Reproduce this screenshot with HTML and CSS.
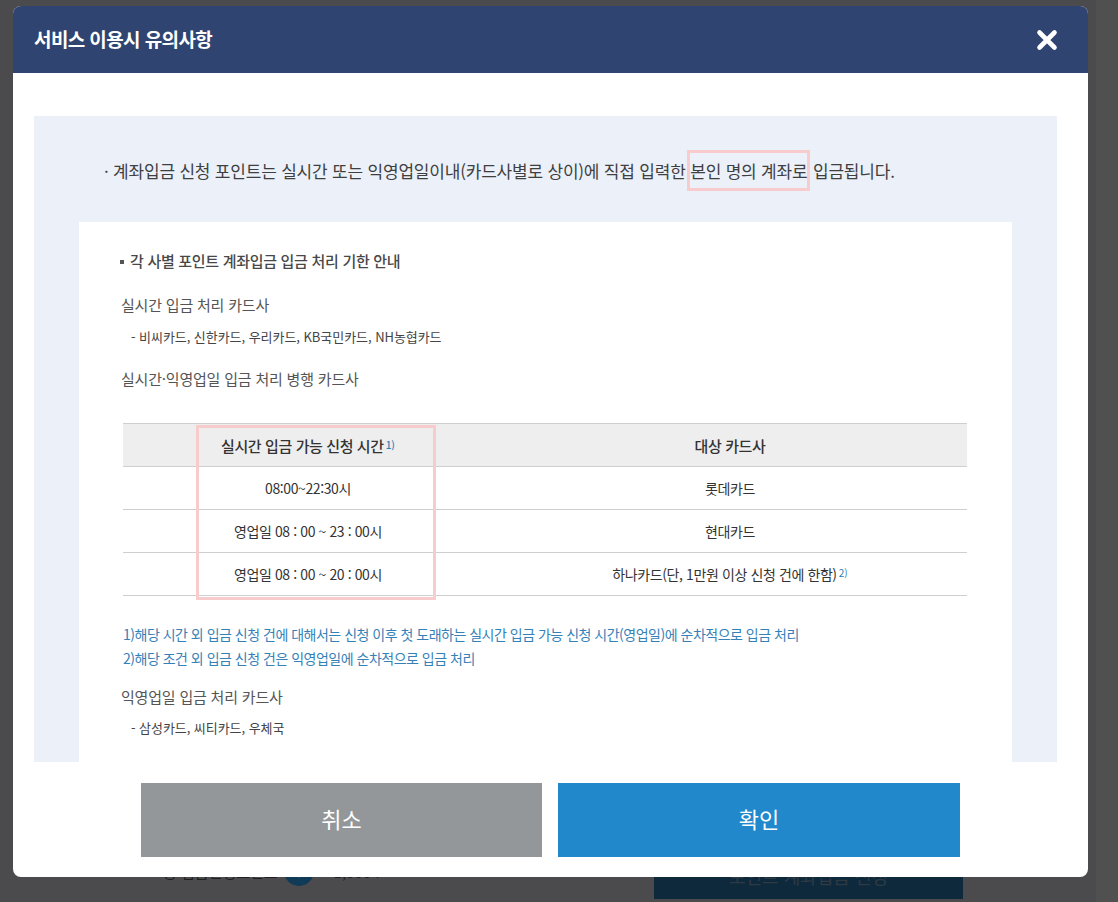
FILE: index.html
```html
<!DOCTYPE html>
<html lang="ko">
<head>
<meta charset="utf-8">
<title>서비스 이용시 유의사항</title>
<link rel="stylesheet" href="styles.css">
</head>
<body>
<div class="page">
  <div class="page-row">
    <div class="page-summary">
      <span class="page-label">총 입금신청포인트</span>
      <span class="page-help">?</span>
      <span class="page-amount">1,000 P</span>
    </div>
    <div class="page-btn">포인트 계좌입금 신청</div>
  </div>
</div>

<div class="modal" role="dialog" aria-labelledby="modal-title">
  <div class="modal-header">
    <h2 class="modal-title" id="modal-title">서비스 이용시 유의사항</h2>
    <button class="modal-close" type="button" aria-label="닫기">
      <svg width="22" height="22" viewBox="0 0 22 22" aria-hidden="true">
        <path d="M3.5 3.5 L18.5 18.5 M18.5 3.5 L3.5 18.5" stroke="#fff" stroke-width="4.6" stroke-linecap="round" fill="none"/>
      </svg>
    </button>
  </div>

  <div class="modal-body">
    <div class="notice-box">
      <p class="notice-lead">· 계좌입금 신청 포인트는 실시간 또는 익영업일이내(카드사별로 상이)에 직접 입력한 <span class="hl">본인 명의 계좌로</span> 입금됩니다.</p>

      <div class="notice-card">
        <h3 class="card-title"><span class="sq" aria-hidden="true"></span>각 사별 포인트 계좌입금 입금 처리 기한 안내</h3>

        <h4 class="sub-title">실시간 입금 처리 카드사</h4>
        <p class="sub-list">- 비씨카드, 신한카드, 우리카드, KB국민카드, NH농협카드</p>

        <h4 class="sub-title sub-title-2">실시간·익영업일 입금 처리 병행 카드사</h4>

        <div class="table-wrap">
          <table class="time-table">
            <colgroup>
              <col class="col-time">
              <col class="col-card">
            </colgroup>
            <thead>
              <tr>
                <th>실시간 입금 가능 신청 시간<sup class="fn">1)</sup></th>
                <th>대상 카드사</th>
              </tr>
            </thead>
            <tbody>
              <tr>
                <td>08:00~22:30시</td>
                <td>롯데카드</td>
              </tr>
              <tr>
                <td>영업일 08 : 00 ~ 23 : 00시</td>
                <td>현대카드</td>
              </tr>
              <tr>
                <td>영업일 08 : 00 ~ 20 : 00시</td>
                <td>하나카드(단, 1만원 이상 신청 건에 한함)<sup class="fn">2)</sup></td>
              </tr>
            </tbody>
          </table>
          <div class="table-hl" aria-hidden="true"></div>
        </div>

        <div class="footnotes">
          <p>1)해당 시간 외 입금 신청 건에 대해서는 신청 이후 첫 도래하는 실시간 입금 가능 신청 시간(영업일)에 순차적으로 입금 처리</p>
          <p>2)해당 조건 외 입금 신청 건은 익영업일에 순차적으로 입금 처리</p>
        </div>

        <h4 class="sub-title sub-title-3">익영업일 입금 처리 카드사</h4>
        <p class="sub-list sub-list-2">- 삼성카드, 씨티카드, 우체국</p>
      </div>
    </div>
  </div>

  <div class="modal-footer">
    <button class="btn btn-cancel" type="button">취소</button>
    <button class="btn btn-ok" type="button">확인</button>
  </div>
</div>
</body>
</html>
```

FILE: styles.css
```css
* {
  box-sizing: border-box;
}

html, body {
  margin: 0;
  padding: 0;
  width: 1118px;
  height: 902px;
  overflow: hidden;
}

body {
  background: #505051;
  font-family: "Noto Sans CJK KR", "Noto Sans", sans-serif;
  color: #333;
}

/* underlying (dimmed) page */
.page {
  width: 1096px;
  height: 902px;
  background: #4b4b4d;
}

.page-row {
  display: flex;
  align-items: flex-start;
  padding: 846px 0 0 163px;
}

.page-summary {
  width: 491px;
  display: flex;
  align-items: center;
  gap: 6px;
  margin-top: 10px;
  color: #1f1f22;
  font-size: 15px;
}

.page-help {
  width: 30px;
  height: 30px;
  border-radius: 50%;
  background: #0f3a58;
  color: #3f4a55;
  font-size: 15px;
  display: flex;
  align-items: center;
  justify-content: center;
}

.page-amount {
  margin-left: 14px;
}

.page-btn {
  width: 309px;
  height: 53px;
  background: #0e293c;
  color: #2f3a45;
  font-size: 18px;
  display: flex;
  align-items: flex-end;
  justify-content: center;
  padding-bottom: 10px;
}

/* modal */
.modal {
  position: fixed;
  top: 6px;
  left: 13px;
  width: 1075px;
  height: 871px;
  background: #fff;
  border-radius: 8px;
  overflow: hidden;
  display: flex;
  flex-direction: column;
}

.modal-header {
  height: 67px;
  flex: none;
  background: #2f4470;
  display: flex;
  align-items: center;
  justify-content: space-between;
  padding: 0 30px 0 21px;
}

.modal-title {
  margin: 0;
  color: #fff;
  font-size: 19px;
  font-weight: 700;
  letter-spacing: -0.6px;
  line-height: 1;
  padding-bottom: 2px;
}

.modal-close {
  border: 0;
  background: transparent;
  padding: 0;
  width: 22px;
  height: 22px;
  display: block;
  cursor: pointer;
}

.modal-close svg {
  display: block;
}

.modal-body {
  flex: 1;
  overflow: hidden;
  padding: 43px 31px 0 21px;
}

.notice-box {
  background: #ebf0f9;
  padding: 0 45px 40px;
}

.notice-lead {
  margin: 0;
  padding: 34px 0 31px 25px;
  font-size: 17px;
  line-height: 41px;
  letter-spacing: -0.2px;
  color: #3f3f3f;
}

.hl {
  display: inline-block;
  line-height: 35px;
  border: 3px solid #f8cccc;
  margin: 0 -2px 0 -3px;
  padding: 0;
}

.notice-card {
  background: #fff;
  padding: 28px 45px 50px 44px;
}

.card-title {
  margin: 0 0 0 -3px;
  font-size: 15px;
  line-height: 22px;
  font-weight: 500;
  color: #484848;
  letter-spacing: -0.3px;
}

.sq {
  display: inline-block;
  width: 4px;
  height: 4px;
  background: #555;
  vertical-align: 3px;
  margin-right: 6px;
}

.sub-title {
  margin: 22px 0 0 -2px;
  font-size: 15px;
  line-height: 22px;
  font-weight: 400;
  color: #555;
  letter-spacing: -0.2px;
}

.sub-title-2 {
  margin-top: 21px;
}

.sub-title-3 {
  margin-top: 16px;
}

.sub-list {
  margin: 11px 0 0 8px;
  font-size: 13px;
  line-height: 20px;
  color: #444;
  letter-spacing: -0.05px;
}

.sub-list-2 {
  margin-top: 10px;
}

.table-wrap {
  position: relative;
  margin-top: 33px;
}

.time-table {
  width: 100%;
  border-collapse: collapse;
  table-layout: fixed;
  border-top: 1px solid #cfcfcf;
}

.col-time {
  width: 370px;
}

.time-table th,
.time-table td {
  text-align: center;
  border-bottom: 1px solid #cfcfcf;
  padding: 0;
  letter-spacing: -0.4px;
}

.time-table th {
  height: 43px;
  background: #eeeeee;
  font-size: 15px;
  font-weight: 500;
  color: #333;
}

.time-table td {
  height: 43px;
  font-size: 14px;
  color: #333;
}

.fn {
  font-size: 10px;
  color: #2f7fb5;
  vertical-align: 3px;
  line-height: 0;
  margin-left: 2px;
  letter-spacing: 0;
}

.table-hl {
  position: absolute;
  left: 73px;
  top: 2px;
  width: 240px;
  height: 175px;
  border: 3px solid #f8cccc;
  pointer-events: none;
}

.footnotes {
  margin-top: 26px;
}

.footnotes p {
  margin: 0;
  font-size: 14px;
  line-height: 24px;
  color: #3581b7;
  letter-spacing: -0.5px;
}

.modal-footer {
  flex: none;
  height: 115px;
  padding: 21px 0 20px;
  display: flex;
  justify-content: center;
  gap: 16px;
}

.btn {
  height: 74px;
  border: 0;
  color: #fff;
  font-family: "Noto Sans CJK KR", "Noto Sans", sans-serif;
  font-size: 22px;
  font-weight: 400;
  line-height: 1;
  padding: 0 0 4px;
  cursor: pointer;
}

.btn-cancel {
  width: 401px;
  background: #939799;
}

.btn-ok {
  width: 402px;
  background: #2288cc;
}
```
